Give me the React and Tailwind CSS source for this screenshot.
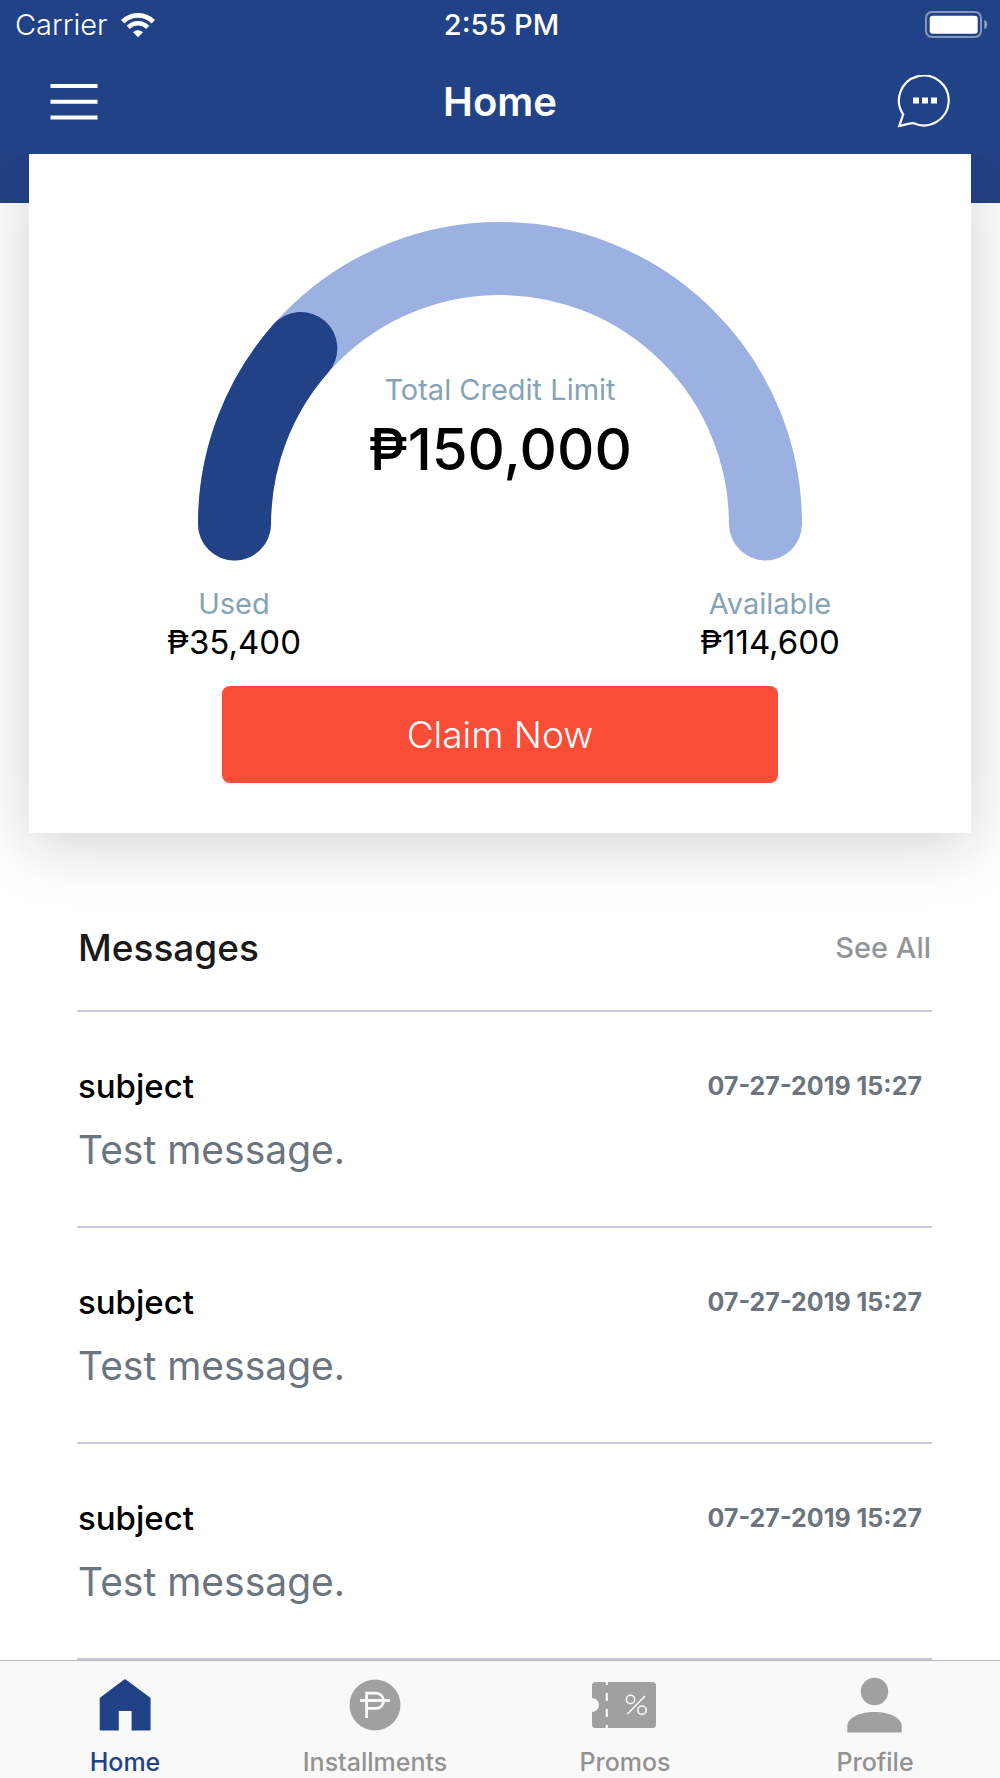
/**
 * Home Page — credit limit gauge, claim button, latest messages and bottom tabs.
 */
const GAUGE = { cx: 302, cy: 302, r: 265.5, stroke: 73 };

const CREDIT = {
  total: '₱150,000',
  used: '₱35,400',
  available: '₱114,600',
  ratio: 0.23,
};

const MESSAGES = [
  { id: 1, subject: 'subject', date: '07-27-2019 15:27', body: 'Test message.' },
  { id: 2, subject: 'subject', date: '07-27-2019 15:27', body: 'Test message.' },
  { id: 3, subject: 'subject', date: '07-27-2019 15:27', body: 'Test message.' },
];

function WifiIcon() {
  return (
    <svg width="34" height="25" viewBox="0 0 34 25" fill="none" aria-hidden="true">
      <path d="M1.700 8.700a21.700 21.700 0 0 1 30.600 0" stroke="#fff" strokeWidth="4.800" />
      <path d="M7.300 14.300a13.700 13.700 0 0 1 19.400 0" stroke="#fff" strokeWidth="4.600" />
      <path d="M17 24.300 12 19.300a7.100 7.100 0 0 1 10 0z" fill="#fff" />
    </svg>
  );
}

function BatteryIcon() {
  return (
    <svg width="63" height="28" viewBox="0 0 63 28" fill="none" aria-hidden="true">
      <rect x="1" y="1" width="55" height="25" rx="6" stroke="#fff" strokeOpacity="0.45" strokeWidth="2" />
      <rect x="4.700" y="4.700" width="48" height="18" rx="3" fill="#fff" />
      <path d="M59.300 8.800c1.800.7 2.900 2.500 2.900 4.700s-1.100 4-2.900 4.700z" fill="#fff" fillOpacity="0.5" />
    </svg>
  );
}

function MenuIcon() {
  return (
    <svg width="48" height="38" viewBox="0 0 48 38" aria-hidden="true">
      <path d="M.5 3h47M.5 18.700h47M.5 34.500h47" stroke="#fff" strokeWidth="4" />
    </svg>
  );
}

function ChatIcon() {
  return (
    <svg width="54" height="54" viewBox="0 0 54 54" fill="none" aria-hidden="true">
      <path
        d="M7.200 39.400A24.900 24.900 0 1 1 17.700 48.200Q16 47.600 3.300 51z"
        stroke="#fff"
        strokeWidth="2.200"
      />
      <path d="M17 22.500h6v6h-6zM26 22.500h6v6h-6zM35 22.500h6v6h-6z" fill="#fff" />
    </svg>
  );
}

function HomeIcon() {
  return (
    <svg width="52" height="52" viewBox="0 0 52 52" fill="currentColor" aria-hidden="true">
      <path d="M25.200.500q.8-.7 1.600 0L51 18.600q.6.5.6 1.300V50.400q0 1-1 1H32.600V32H19.800V51.400H1.700q-1 0-1-1V19.900q0-.8.6-1.300z" />
    </svg>
  );
}

function InstallmentsIcon() {
  return (
    <svg width="52" height="52" viewBox="0 0 52 52" fill="none" aria-hidden="true">
      <circle cx="26" cy="26" r="25.500" fill="currentColor" />
      <path d="M17.600 39V14.200h9.400a7.600 7.600 0 0 1 0 15.200h-9.400M11 21.500h30" stroke="#f9f9f9" strokeWidth="2.800" />
    </svg>
  );
}

function PromosIcon() {
  return (
    <svg width="66" height="52" viewBox="1.500 0 66 52" fill="none" aria-hidden="true">
      <path
        d="M5 3h57a3.500 3.500 0 0 1 3.500 3.500v39A3.500 3.500 0 0 1 62 49H5a3.500 3.500 0 0 1-3.500-3.500V33a6.800 6.800 0 0 0 0-14V6.500A3.500 3.500 0 0 1 5 3z"
        fill="currentColor"
      />
      <path d="M16.300 3v3M16.300 14v8M16.300 30v8M16.300 46v3" stroke="#f9f9f9" strokeWidth="2.200" />
      <circle cx="40" cy="20.500" r="4.200" stroke="#f9f9f9" strokeWidth="1.600" />
      <circle cx="51.500" cy="31.200" r="4.200" stroke="#f9f9f9" strokeWidth="1.600" />
      <path d="M54.500 17 37 35" stroke="#f9f9f9" strokeWidth="1.600" />
    </svg>
  );
}

function ProfileIcon() {
  return (
    <svg width="56" height="56" viewBox="0 0 56 56" fill="currentColor" aria-hidden="true">
      <circle cx="27.500" cy="14.500" r="13.700" />
      <path d="M.3 55.500V49C.3 41 12.500 35 27.500 35s27.200 6 27.200 14v6.500z" />
    </svg>
  );
}

const TABS = [
  { label: 'Home', Icon: HomeIcon, active: true },
  { label: 'Installments', Icon: InstallmentsIcon },
  { label: 'Promos', Icon: PromosIcon },
  { label: 'Profile', Icon: ProfileIcon },
];

/* Point on the half circle, 0 is the left end and 1 the right end */
function gaugePoint(ratio) {
  const angle = Math.PI * (1 - ratio);
  return `${GAUGE.cx + GAUGE.r * Math.cos(angle)} ${GAUGE.cy - GAUGE.r * Math.sin(angle)}`;
}

function CreditGauge({ ratio }) {
  const arc = (end) => `M${gaugePoint(0)}A${GAUGE.r} ${GAUGE.r} 0 0 1 ${gaugePoint(end)}`;

  return (
    <svg
      viewBox="0 0 604 340"
      className="w-full"
      fill="none"
      strokeWidth={GAUGE.stroke}
      strokeLinecap="round"
      role="img"
      aria-label="Used credit"
    >
      <path d={arc(1)} stroke="#9cb1e1" />
      <path d={arc(ratio)} stroke="#224288" />
    </svg>
  );
}

function CreditAmount({ label, value }) {
  return (
    <div className="w-[180px] text-center">
      <p className="text-[29px] leading-[36px] text-[#86a3b3]">{label}</p>
      <p className="text-[33px] leading-[40px] text-black">{value}</p>
    </div>
  );
}

function MessageRow({ subject, date, body }) {
  return (
    <li className="h-[216px] border-b-2 border-[#c9cadb] pt-[50px] pl-px">
      <div className="flex items-center justify-between pr-[10px]">
        <h3 className="text-[33px] leading-[48px] font-medium text-black">{subject}</h3>
        <time className="text-[25px] leading-[48px] font-bold text-[#6c757d]">{date}</time>
      </div>
      <p className="mt-4 text-[39px] leading-[48px] text-[#6c757d]">{body}</p>
    </li>
  );
}

export default function App() {
  return (
    <div className="flex min-h-screen flex-col bg-white font-['Inter',sans-serif]">
      {/* Status bar + nav bar */}
      <header className="relative z-10 bg-[#224288] text-white">
        <div className="grid h-[50px] grid-cols-3 items-center pr-[12px] pl-[15px]">
          <div className="flex items-center gap-[14px]">
            <span className="text-[29px] leading-[36px] font-light">Carrier</span>
            <WifiIcon />
          </div>
          <span className="text-center text-[29px] leading-[36px] font-medium">2:55 PM</span>
          <div className="flex justify-end">
            <BatteryIcon />
          </div>
        </div>
        <div className="grid h-[104px] grid-cols-3 items-center px-[50px]">
          <button type="button" aria-label="Menu" className="justify-self-start">
            <MenuIcon />
          </button>
          <h1 className="text-center text-[40px] leading-[48px] font-semibold">Home</h1>
          <button type="button" aria-label="Chat" className="justify-self-end">
            <ChatIcon />
          </button>
        </div>
      </header>

      <main className="flex-1">
        {/* Credit card panel, overlaps the blue strip */}
        <div className="h-[49px] bg-[#224288]" />
        <section className="relative mx-[29px] -mt-[49px] flex flex-col items-center bg-white pt-[68px] pb-[50px] shadow-[0_10px_60px_rgba(35,22,28,0.2)]">
          <div className="relative w-[604px]">
            <CreditGauge ratio={CREDIT.ratio} />
            <div className="absolute inset-x-0 top-[150px] text-center">
              <p className="text-[29px] leading-[36px] text-[#86a3b3]">Total Credit Limit</p>
              <p className="mt-2 text-[58px] leading-[66px] font-medium text-black">{CREDIT.total}</p>
            </div>
          </div>

          <div className="mt-[24px] flex w-[720px] justify-between pl-[4px]">
            <CreditAmount label="Used" value={CREDIT.used} />
            <CreditAmount label="Available" value={CREDIT.available} />
          </div>

          <button
            type="button"
            className="mt-[24px] h-[97px] w-[556px] rounded-lg bg-[#f94d37] text-[37px] leading-[48px] font-light text-white"
          >
            Claim Now
          </button>
        </section>

        {/* Messages */}
        <section className="mt-[76px] pr-[68px] pl-[77px]">
          <div className="flex h-[103px] items-start justify-between border-b-2 border-[#c9cadb] px-px pt-[15px]">
            <h2 className="text-[37px] leading-[48px] font-medium text-[#1a1a1a]">Messages</h2>
            <a href="#messages" className="text-[29px] leading-[48px] font-medium text-[#939699]">
              See All
            </a>
          </div>
          <ul id="messages">
            {MESSAGES.map((message) => (
              <MessageRow key={message.id} {...message} />
            ))}
          </ul>
        </section>
      </main>

      {/* Bottom tabs */}
      <nav className="sticky bottom-0 grid h-[119px] grid-cols-4 border-t border-[#b9b9bd] bg-[#f9f9f9]">
        {TABS.map(({ label, Icon, active }) => (
          <a
            key={label}
            href={`#${label.toLowerCase()}`}
            aria-current={active ? 'page' : undefined}
            className={`flex flex-col items-center pt-[15px] ${active ? 'text-[#224288]' : 'text-[#a0a0a0]'}`}
          >
            <span className="flex h-[58px] items-center">
              <Icon />
            </span>
            <span className={`mt-[12px] text-[25px] leading-[32px] font-medium ${active ? '' : 'text-[#929292]'}`}>
              {label}
            </span>
          </a>
        ))}
      </nav>
    </div>
  );
}
